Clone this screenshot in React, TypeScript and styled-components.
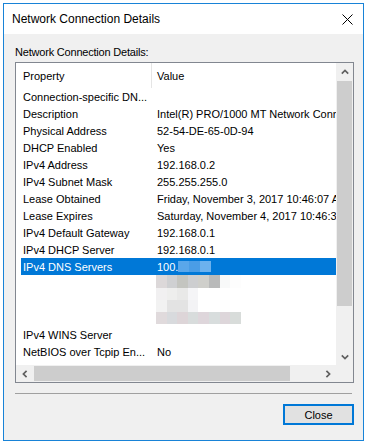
import React from "react";
import styled, { createGlobalStyle } from "styled-components";

const GlobalStyle = createGlobalStyle`
  html, body { margin: 0; padding: 0; background: #ffffff; }
  body {
    font-family: "Liberation Sans", Arial, sans-serif;
    font-size: 11px;
    color: #000;
  }
`;

const Page = styled.div`
  padding: 3px;
`;

const Window = styled.div`
  width: 361px;
  height: 438px;
  box-sizing: border-box;
  border: 1px solid #1883d7;
  background: #f0f0f0;
  display: flex;
  flex-direction: column;
`;

const TitleBar = styled.div`
  height: 30px;
  flex-shrink: 0;
  background: #ffffff;
  display: flex;
  align-items: center;
  justify-content: space-between;
  padding: 0 10px 0 8px;
`;

const TitleText = styled.span`
  font-size: 12px;
  line-height: 16px;
`;

const Content = styled.div`
  flex: 1;
  display: flex;
  flex-direction: column;
  padding: 10px 9px 15px 11px;
`;

const Label = styled.div`
  line-height: 16px;
  letter-spacing: -0.2px;
  margin-bottom: 2px;
`;

const ListBox = styled.div`
  width: 339px;
  height: 321px;
  box-sizing: border-box;
  border: 1px solid #828790;
  background: #ffffff;
  display: grid;
  grid-template-columns: 320px 17px;
  grid-template-rows: 302px 17px;
`;

const ListArea = styled.div`
  overflow: hidden;
  display: flex;
  flex-direction: column;
`;

const Header = styled.div`
  height: 25px;
  flex-shrink: 0;
  display: flex;
`;

const HeaderCell = styled.div<{ $w?: number; $divider?: boolean }>`
  ${(p) => (p.$w ? `width: ${p.$w}px;` : "flex: 1;")}
  box-sizing: border-box;
  padding-left: ${(p) => (p.$divider ? 7 : 5)}px;
  line-height: 26px;
  white-space: nowrap;
  border-right: ${(p) => (p.$divider ? "1px solid #e5e5e5" : "none")};
`;

const Body = styled.div`
  padding-left: 5px;
  display: flex;
  flex-direction: column;
`;

const Row = styled.div<{ $selected?: boolean; $h?: number }>`
  height: ${(p) => p.$h ?? 17}px;
  flex-shrink: 0;
  display: flex;
  background: ${(p) => (p.$selected ? "#0078d7" : "transparent")};
  color: ${(p) => (p.$selected ? "#ffffff" : "#000000")};
`;

const NameCell = styled.div`
  width: 130px;
  flex-shrink: 0;
  box-sizing: border-box;
  padding-left: 2px;
  line-height: 18px;
  white-space: nowrap;
  overflow: hidden;
`;

const ValueCell = styled.div<{ $pad?: number }>`
  flex: 1;
  padding-left: ${(p) => p.$pad ?? 6}px;
  line-height: 18px;
  white-space: nowrap;
  overflow: hidden;
  display: flex;
  align-items: flex-start;
`;

const InlineBlur = styled.span`
  display: inline-flex;
  height: 11px;
  margin-top: 3px;
`;

const BlurBit = styled.span<{ $c: string }>`
  width: 11px;
  height: 100%;
  background: ${(p) => p.$c};
`;

const Patch = styled.div`
  display: flex;
  flex-direction: column;
`;

const PatchRow = styled.div<{ $h: number }>`
  display: grid;
  grid-template-columns: repeat(8, 10.6px);
  height: ${(p) => p.$h}px;
`;

const PatchCell = styled.div<{ $c: string }>`
  background: ${(p) => p.$c};
`;

const VScroll = styled.div`
  background: #f0f0f0;
  display: flex;
  flex-direction: column;
`;

const HScroll = styled.div`
  background: #f0f0f0;
  display: flex;
  align-items: center;
`;

const Corner = styled.div`
  background: #f0f0f0;
`;

const ArrowBtn = styled.div`
  width: 17px;
  height: 17px;
  flex-shrink: 0;
  display: flex;
  align-items: center;
  justify-content: center;
`;

const VThumb = styled.div<{ $top: number; $len: number }>`
  margin: ${(p) => p.$top}px 1px 0 1px;
  height: ${(p) => p.$len}px;
  background: #cdcdcd;
`;

const Spacer = styled.div`
  flex: 1;
`;

const HThumb = styled.div<{ $left: number; $len: number }>`
  margin-left: ${(p) => p.$left}px;
  width: ${(p) => p.$len}px;
  height: 15px;
  background: #cdcdcd;
`;

const Separator = styled.div`
  height: 1px;
  background: #a0a0a0;
  margin: 10px 2px 0 0;
`;

const ButtonRow = styled.div`
  display: flex;
  justify-content: flex-end;
  margin-top: 10px;
`;

const CloseButton = styled.button`
  width: 71px;
  height: 21px;
  box-sizing: border-box;
  border: 1px solid #0078d7;
  box-shadow: inset 0 0 0 1px #0078d7;
  background: #e1e1e1;
  font-family: "Liberation Sans", Arial, sans-serif;
  font-size: 11px;
  color: #000;
  padding: 0;
  margin: 0;
`;

const rot: Record<string, number> = { up: 0, right: 90, down: 180, left: 270 };

const Chevron = ({ dir }: { dir: "up" | "down" | "left" | "right" }) => (
  <svg width="8" height="8" viewBox="0 0 8 8" style={{ transform: `rotate(${rot[dir]}deg)` }}>
    <path d="M0.8 5.6 L4 2.4 L7.2 5.6" fill="none" stroke="#606060" strokeWidth="1.7" />
  </svg>
);

const CloseX = () => (
  <svg width="11" height="11" viewBox="0 0 11 11">
    <path d="M0.5 0.5 L10.5 10.5 M10.5 0.5 L0.5 10.5" stroke="#000" strokeWidth="1" />
  </svg>
);

const rowsTop: [string, string][] = [
  ["Connection-specific DN...", ""],
  ["Description", "Intel(R) PRO/1000 MT Network Connection"],
  ["Physical Address", "52-54-DE-65-0D-94"],
  ["DHCP Enabled", "Yes"],
  ["IPv4 Address", "192.168.0.2"],
  ["IPv4 Subnet Mask", "255.255.255.0"],
  ["Lease Obtained", "Friday, November 3, 2017 10:46:07 AM"],
  ["Lease Expires", "Saturday, November 4, 2017 10:46:38 AM"],
  ["IPv4 Default Gateway", "192.168.0.1"],
  ["IPv4 DHCP Server", "192.168.0.1"],
];

const rowsBottom: [string, string][] = [
  ["IPv4 WINS Server", ""],
  ["NetBIOS over Tcpip En...", "No"],
  ["Link-local IPv6 Address", "fe80::4518:f8c5:2e8f:95a4%4"],
];

const patch: { h: number; c: string[] }[] = [
  { h: 13, c: ["#dcd8d9", "#cfd0d2", "#c4c5c0", "#cdced0", "#cfcfcb", "#b9baba", "#f8f9f9", "#fdfdfd"] },
  { h: 12, c: ["#f1f0f1", "#eeeeed", "#e9e9e8", "#f5f5f7", "#ffffff", "#ffffff", "#ffffff", "#ffffff"] },
  { h: 12, c: ["#f2f2f2", "#e3e3e3", "#e3e3e3", "#f3f3f5", "#ffffff", "#ffffff", "#fefefe", "#ffffff"] },
  { h: 12, c: ["#e0dadc", "#d8dadd", "#ddd5d8", "#d8dcdc", "#ded6db", "#d8dddd", "#ddd6da", "#d8dcda"] },
];

const selBlur = ["#5aa7ea", "#4a9de6", "#6cb2ee"];

export default function App() {
  return (
    <Page>
      <GlobalStyle />
      <Window>
        <TitleBar>
          <TitleText>Network Connection Details</TitleText>
          <CloseX />
        </TitleBar>
        <Content>
          <Label>Network Connection Details:</Label>
          <ListBox>
            <ListArea>
              <Header>
                <HeaderCell $w={136} $divider>Property</HeaderCell>
                <HeaderCell>Value</HeaderCell>
              </Header>
              <Body>
                {rowsTop.map(([n, v]) => (
                  <Row key={n}>
                    <NameCell>{n}</NameCell>
                    <ValueCell>{v}</ValueCell>
                  </Row>
                ))}
                <Row $selected>
                  <NameCell>IPv4 DNS Servers</NameCell>
                  <ValueCell>
                    100.
                    <InlineBlur>
                      {selBlur.map((c, i) => (
                        <BlurBit key={i} $c={c} />
                      ))}
                    </InlineBlur>
                  </ValueCell>
                </Row>
                <Row $h={51}>
                  <NameCell />
                  <ValueCell $pad={5}>
                    <Patch>
                      {patch.map((r, i) => (
                        <PatchRow key={i} $h={r.h}>
                          {r.c.map((c, j) => (
                            <PatchCell key={j} $c={c} />
                          ))}
                        </PatchRow>
                      ))}
                    </Patch>
                  </ValueCell>
                </Row>
                {rowsBottom.map(([n, v]) => (
                  <Row key={n}>
                    <NameCell>{n}</NameCell>
                    <ValueCell>{v}</ValueCell>
                  </Row>
                ))}
              </Body>
            </ListArea>
            <VScroll>
              <ArrowBtn>
                <Chevron dir="up" />
              </ArrowBtn>
              <VThumb $top={1} $len={225} />
              <Spacer />
              <ArrowBtn>
                <Chevron dir="down" />
              </ArrowBtn>
            </VScroll>
            <HScroll>
              <ArrowBtn>
                <Chevron dir="left" />
              </ArrowBtn>
              <HThumb $left={1} $len={256} />
              <Spacer />
              <ArrowBtn>
                <Chevron dir="right" />
              </ArrowBtn>
            </HScroll>
            <Corner />
          </ListBox>
          <Separator />
          <ButtonRow>
            <CloseButton>Close</CloseButton>
          </ButtonRow>
        </Content>
      </Window>
    </Page>
  );
}
